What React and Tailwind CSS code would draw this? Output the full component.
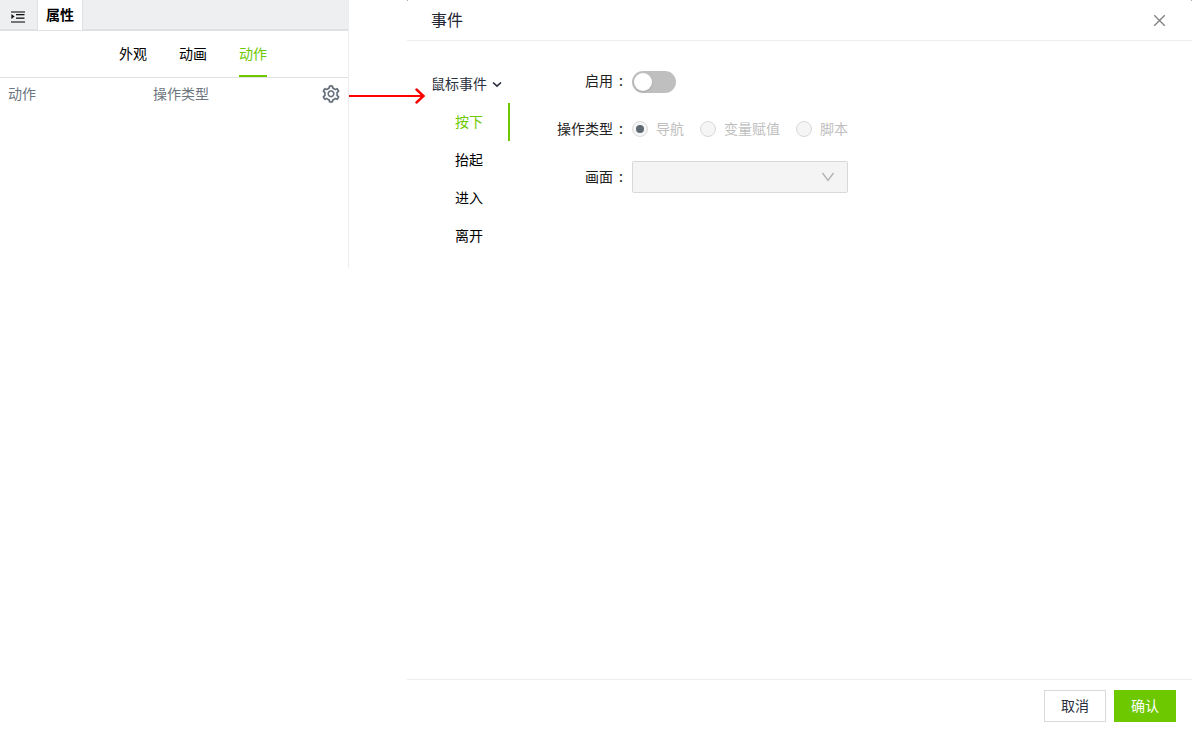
import React, { useState } from "react";
import { AiOutlineClose, AiOutlineSetting } from "react-icons/ai";

const propertyTabs = ["外观", "动画", "动作"];
const mouseEvents = ["按下", "抬起", "进入", "离开"];
const actionTypes = ["导航", "变量赋值", "脚本"];

function IndentIcon() {
  return (
    <svg width="14" height="12" viewBox="0 0 14 12" aria-hidden="true">
      <g fill="#74777a">
        <rect x="0" y="0" width="14" height="2" />
        <rect x="0" y="10" width="14" height="2" />
      </g>
      <g fill="#111">
        <rect x="5" y="3" width="8.5" height="1.3" />
        <rect x="5" y="6.5" width="8.5" height="1.3" />
        <path d="M0.4 3L3.6 5.5L0.4 8Z" />
      </g>
    </svg>
  );
}

function Field({ label, htmlFor, children }) {
  return (
    <div className="flex h-8 items-center">
      <label htmlFor={htmlFor} className="flex w-[122px] shrink-0 justify-end pr-[3px] pb-0.5 text-[#222]">
        {label}
        <span className="w-4 text-center">:</span>
      </label>
      {children}
    </div>
  );
}

function PropertyPanel({ tab, onTab }) {
  return (
    <section className="relative h-[268px] w-[349px] shrink-0 border-r border-[#ebedef]">
      <header className="flex h-[31px] border-b-2 border-[#dfe1e3] bg-[#eeeff1]">
        <button type="button" aria-label="折叠" className="flex w-[37px] items-center justify-center pt-1 pr-0.5">
          <IndentIcon />
        </button>
        <h2 className="h-[30px] border-x border-[#dfe1e3] bg-white px-2 text-sm leading-7 font-bold text-black">
          属性
        </h2>
      </header>
      <nav className="flex h-[47px] gap-8 border-b border-[#dfe1e3] pl-[119px]">
        {propertyTabs.map((name) => (
          <button
            key={name}
            type="button"
            onClick={() => onTab(name)}
            className={
              name === tab
                ? "border-b-2 border-[#6dc800] text-[#6dc800]"
                : "border-b-2 border-transparent text-black"
            }
          >
            {name}
          </button>
        ))}
      </nav>
      <div className="flex h-8 items-center pr-[7px] pl-2 text-[#6c7680]">
        <span className="w-[145px] pb-0.5">动作</span>
        <span className="grow pb-0.5">操作类型</span>
        <button type="button" aria-label="设置" className="text-[#5f6973]">
          <AiOutlineSetting size={20} stroke="currentColor" strokeWidth={12} />
        </button>
      </div>
      <svg
        className="absolute top-[88px] left-full"
        width="78"
        height="16"
        viewBox="0 0 78 16"
        fill="none"
        stroke="#f00"
        strokeWidth="2"
        aria-hidden="true"
      >
        <path d="M1 8H76" />
        <path d="M68.5 1.5L75.5 8L68.5 14.5" strokeWidth="2.4" strokeLinecap="round" />
      </svg>
    </section>
  );
}

export default function App() {
  const [tab, setTab] = useState("动作");
  const [event, setEvent] = useState("按下");
  const [enabled, setEnabled] = useState(false);

  return (
    <div className="flex min-h-screen items-start gap-[58px] bg-white font-['Noto_Sans_CJK_SC',sans-serif] text-sm">
      <PropertyPanel tab={tab} onTab={setTab} />
      <section
        role="dialog"
        aria-labelledby="dialog-title"
        className="relative flex min-h-screen grow flex-col before:absolute before:top-0 before:left-0 before:size-px before:bg-[#aaa] before:content-[''] after:absolute after:top-0 after:right-0 after:size-px after:bg-[#aaa] after:content-['']"
      >
        <header className="flex h-[41px] items-center justify-between border-b border-[#eee] px-6">
          <h1 id="dialog-title" className="pb-0.5 text-base text-[#1f2533]">事件</h1>
          <button type="button" aria-label="关闭" className="text-[#808080]">
            <AiOutlineClose size={17} />
          </button>
        </header>

        <div className="flex grow pt-6">
          <nav className="w-[103px] shrink-0">
            <button type="button" className="flex h-[38px] items-center gap-1 pl-6 text-[#2a3040]">
              <span className="pb-0.5">鼠标事件</span>
              <svg width="12" height="12" viewBox="0 0 12 12" fill="none" stroke="currentColor" strokeWidth="1.7">
                <path d="M2 4.5L6 8.2L10 4.5" />
              </svg>
            </button>
            {mouseEvents.map((name) => (
              <button
                key={name}
                type="button"
                onClick={() => setEvent(name)}
                className={
                  name === event
                    ? "block h-[38px] w-full border-r-2 border-[#6dc800] pb-0.5 pl-12 text-left text-[#6dc800]"
                    : "block h-[38px] w-full border-r-2 border-transparent pb-0.5 pl-12 text-left text-black"
                }
              >
                {name}
              </button>
            ))}
          </nav>

          <form className="flex flex-col gap-4">
            <Field label="启用" htmlFor="enabled">
              <input
                id="enabled"
                type="checkbox"
                role="switch"
                checked={enabled}
                onChange={(e) => setEnabled(e.target.checked)}
                className="mt-0.5 h-[22px] w-11 appearance-none rounded-full bg-[#bfbfbf] p-0.5 before:block before:size-[18px] before:rounded-full before:bg-white before:shadow before:content-[''] checked:bg-[#6dc800] checked:before:ml-[22px]"
              />
            </Field>
            <Field label="操作类型" htmlFor="action-0">
              <div className="flex gap-4">
                {actionTypes.map((name, i) => (
                  <label key={name} className="flex items-center gap-2 text-[#bfbfbf]">
                    <input
                      id={`action-${i}`}
                      type="radio"
                      name="action"
                      disabled
                      defaultChecked={i === 0}
                      className="flex size-4 appearance-none items-center justify-center rounded-full border border-[#d9d9d9] bg-[#f5f5f5] checked:before:size-2 checked:before:rounded-full checked:before:bg-[#5f6973] checked:before:content-['']"
                    />
                    <span className="pb-0.5">{name}</span>
                  </label>
                ))}
              </div>
            </Field>
            <Field label="画面" htmlFor="screen">
              <div className="relative">
                <select
                  id="screen"
                  disabled
                  className="block h-8 w-[216px] appearance-none rounded-xs border border-[#d9d9d9] bg-[#f4f4f4] px-3 opacity-100"
                />
                <svg
                  className="pointer-events-none absolute top-2.5 right-3.5"
                  width="12"
                  height="12"
                  viewBox="0 0 12 12"
                  fill="none"
                  stroke="#b0b0b0"
                  strokeWidth="1.3"
                  aria-hidden="true"
                >
                  <path d="M0.5 2L6 9.5L11.5 2" />
                </svg>
              </div>
            </Field>
          </form>
        </div>

        <footer className="flex justify-end gap-2 border-t border-[#eee] px-4 pt-2.5 pb-[7px]">
          <button type="button" className="h-8 border border-[#d9d9d9] bg-white px-4 pb-0.5 text-[#2a3040]">
            取消
          </button>
          <button type="button" className="h-8 border border-[#6dc800] bg-[#6dc800] px-4 pb-0.5 text-white">
            确认
          </button>
        </footer>
      </section>
    </div>
  );
}
